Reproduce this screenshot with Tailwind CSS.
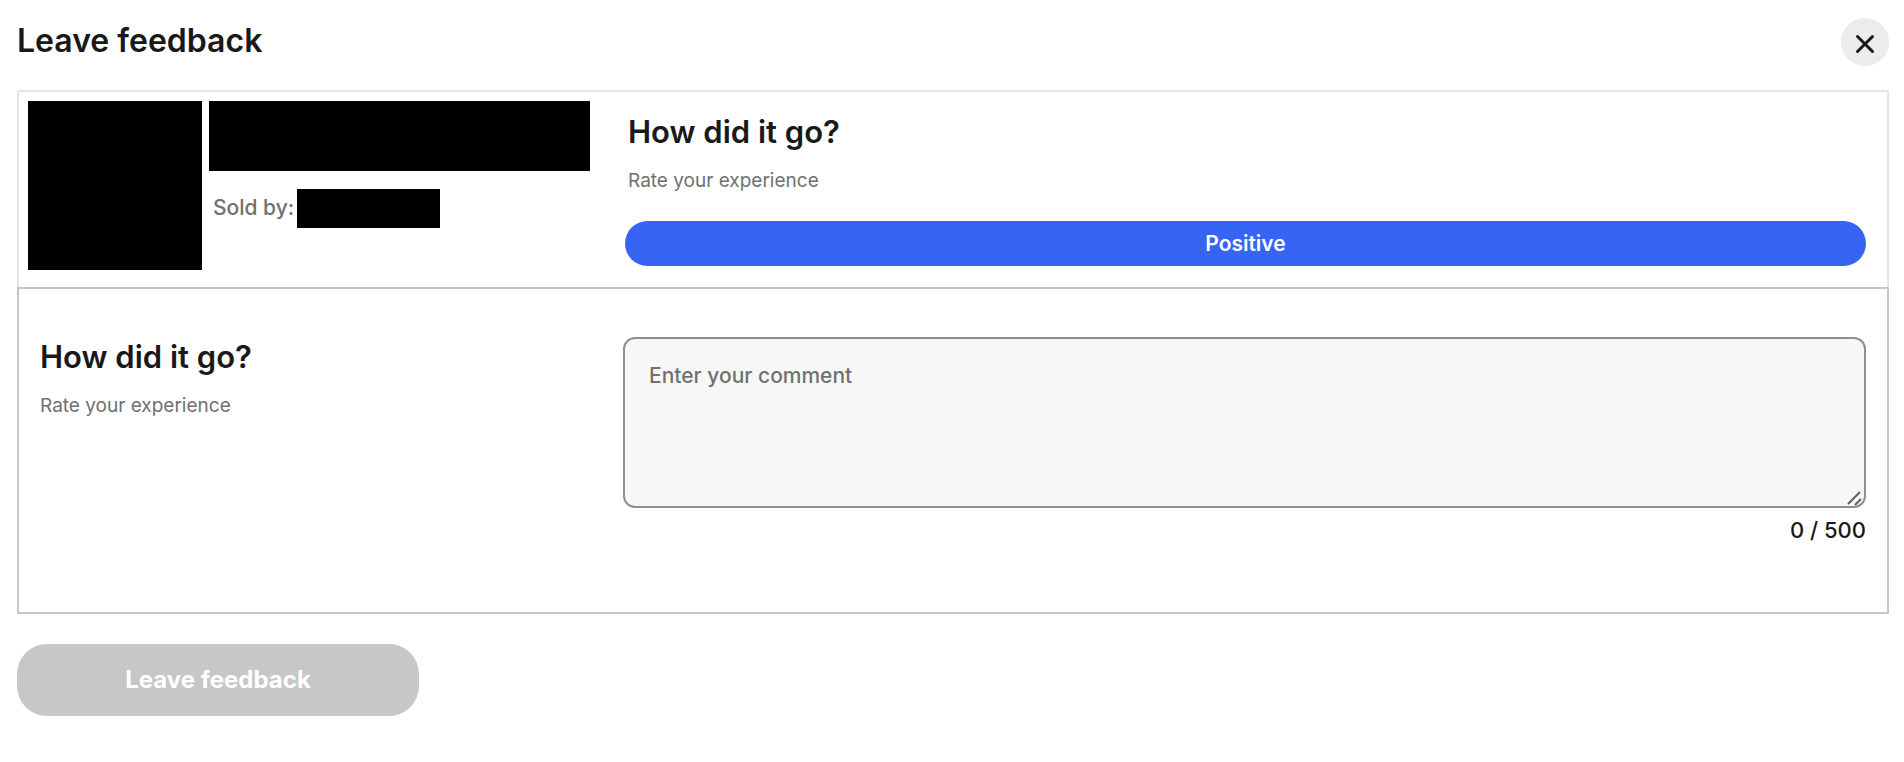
<!DOCTYPE html>
<html lang="en">
<head>
<meta charset="utf-8">
<meta name="viewport" content="width=device-width, initial-scale=1">
<title>Leave feedback</title>
<script src="https://cdn.jsdelivr.net/npm/@tailwindcss/browser@4"></script>
</head>
<body class="bg-white font-['Inter','Liberation_Sans',sans-serif] text-[#191919]">
<main class="pl-[17px] pr-[15px] pb-11">
  <header class="flex items-start justify-between pt-[18px]">
    <h1 class="pt-[3px] text-[32px] leading-10 font-semibold">Leave feedback</h1>
    <button type="button" aria-label="Close" class="flex size-12 items-center justify-center rounded-full bg-[#ececec] pt-1">
      <svg class="size-5" viewBox="0 0 20 20" fill="none" stroke="#191919" stroke-width="3" stroke-linecap="round" aria-hidden="true"><path d="M2.5 2.5l15 15M17.5 2.5l-15 15"/></svg>
    </button>
  </header>

  <section class="mt-6 grid grid-cols-[606px_1fr] border-2 border-b-0 border-[#e5e5e5] pr-[21px] pb-[17px]">
    <div class="flex items-start gap-[7px] pt-[9px] pl-[9px]">
      <div class="h-[169px] w-[174px] bg-black"></div>
      <div>
        <div class="h-[70px] w-[381px] bg-black"></div>
        <div class="mt-[18px] flex items-start gap-0.5 pl-1">
          <p class="w-[82px] pt-[3px] text-[21px] leading-8 font-medium whitespace-nowrap text-[#707070]">Sold by:</p>
          <div class="h-[39px] w-[143px] bg-black"></div>
        </div>
      </div>
    </div>
    <div class="pt-5">
      <h2 class="pl-[3px] text-[31px] leading-10 font-semibold">How did it go?</h2>
      <p class="mt-[15px] pl-[3px] text-[19px] leading-7 text-[#707070]">Rate your experience</p>
      <button type="button" class="mt-[26px] block h-[45px] w-full rounded-full bg-[#3665f3] text-[21px] leading-7 font-semibold text-white">Positive</button>
    </div>
  </section>

  <section class="grid grid-cols-[604px_1fr] border-2 border-[#c7c7c7] pt-12 pr-[21px] pb-[68px]">
    <div class="pl-[21px]">
      <h2 class="text-[31px] leading-10 font-semibold">How did it go?</h2>
      <p class="mt-[15px] text-[19px] leading-7 text-[#707070]"><label for="comment">Rate your experience</label></p>
    </div>
    <div>
      <div class="relative">
        <textarea id="comment" maxlength="500" placeholder="Enter your comment" class="block h-[171px] w-full resize-none rounded-xl border-2 border-[#8f8f8f] bg-[#f7f7f7] px-6 py-[23px] text-[21px] leading-7 font-medium outline-none placeholder:text-[#707070]"></textarea>
        <svg class="pointer-events-none absolute right-1 bottom-0.5 h-4 w-4" viewBox="0 0 16 16" fill="none" stroke="#5f5f5f" stroke-width="2" aria-hidden="true"><path d="M2 14L14 2M9 15l6-6"/></svg>
      </div>
      <p class="mt-2 text-right text-[22px] leading-7 font-medium">0 / 500</p>
    </div>
  </section>

  <button type="button" disabled class="mt-[30px] block h-[72px] w-[402px] rounded-[30px] bg-[#c7c7c7] text-[24px] leading-8 font-bold text-white">Leave feedback</button>
</main>
</body>
</html>
